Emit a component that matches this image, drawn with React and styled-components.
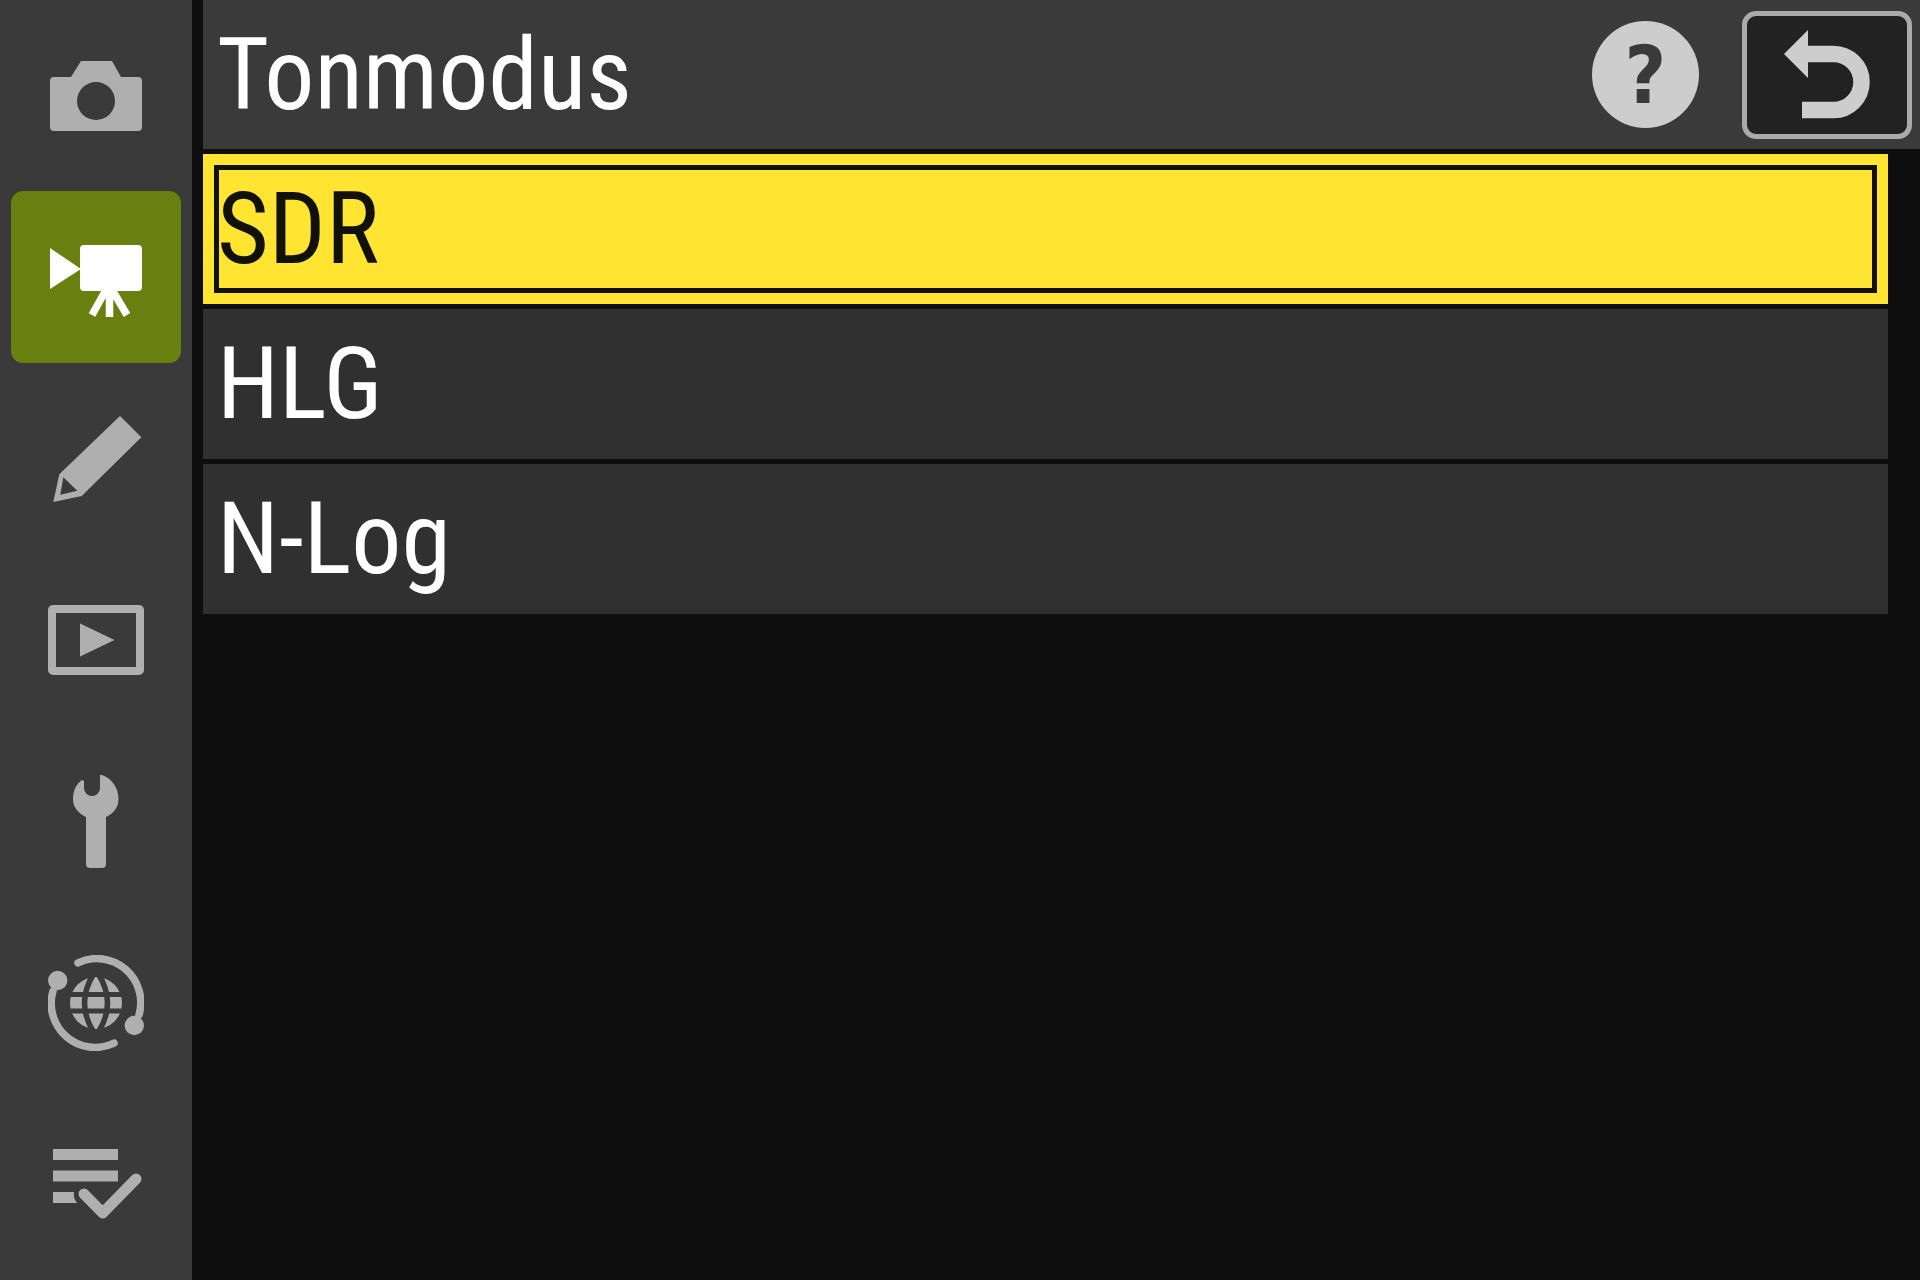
import React, { useState } from "react";
import styled, { createGlobalStyle } from "styled-components";

const GlobalStyle = createGlobalStyle`
  *, *::before, *::after { box-sizing: border-box; }
  body {
    margin: 0;
    background: #0e0e0e;
    font-family: "Roboto Condensed", Roboto, "Open Sans", sans-serif;
    font-weight: 400;
  }
  button {
    margin: 0;
    border: 0;
    font: inherit;
    cursor: pointer;
  }
`;

const Screen = styled.div`
  display: flex;
  gap: 11px;
  min-height: 100vh;
`;

const Sidebar = styled.nav`
  flex: none;
  display: flex;
  flex-direction: column;
  gap: 10px;
  width: 192px;
  padding: 10px 11px;
  background: #3a3a3a;
`;

const Tab = styled.button`
  flex: 1;
  display: flex;
  align-items: center;
  justify-content: center;
  padding: 0;
  border-radius: 12px;
  background: ${(p) => (p.$active ? "#698010" : "#3a3a3a")};
  color: ${(p) => (p.$active ? "#fff" : "#afafaf")};
`;

const Icon = styled.svg`
  display: block;
  width: 96px;
  height: 96px;
  fill: currentColor;
`;

const Main = styled.main`
  flex: 1;
  min-width: 0;
`;

const Header = styled.header`
  display: flex;
  align-items: center;
  height: 149px;
  padding-right: 8px;
  background: #3a3a3a;
`;

const Title = styled.h1`
  flex: 1;
  margin: 0;
  padding-left: 14px;
  font-size: 100px;
  line-height: 148px;
  font-weight: inherit;
  color: #fff;
`;

const HelpButton = styled.button`
  width: 107px;
  height: 107px;
  margin-right: 43px;
  padding: 2px 0 0;
  border-radius: 50%;
  background: #cdcdcd;
  color: #3a3a3a;
  font-family: "DejaVu Sans Condensed", "DejaVu Sans", sans-serif;
  font-weight: 700;
  font-size: 80px;
  line-height: 105px;
`;

const BackButton = styled.button`
  display: flex;
  align-items: center;
  justify-content: center;
  width: 170px;
  height: 128px;
  padding: 0;
  border: 5px solid #aaa;
  border-radius: 14px;
  background: #222;
  color: #cdcdcd;
`;

const BackIcon = styled.svg`
  display: block;
  width: 88px;
  height: 90px;
  fill: currentColor;
`;

const Options = styled.div`
  display: flex;
  flex-direction: column;
  gap: 5px;
  padding: 5px 32px 0 0;
`;

const Option = styled.button`
  height: 150px;
  padding: 0 0 0 14px;
  text-align: left;
  font-size: 100px;
  line-height: 148px;
  background: ${(p) => (p.$selected ? "#ffe432" : "#303030")};
  color: ${(p) => (p.$selected ? "#111108" : "#fff")};
  outline: ${(p) => (p.$selected ? "5px solid #111108" : "none")};
  outline-offset: -16px;
`;

const CameraIcon = () => (
  <Icon viewBox="0 0 96 96">
    <path
      fillRule="evenodd"
      d="M6 29H23L33 13H64L73 29H90Q94 29 94 33V79Q94 83 90 83H6Q2 83 2 79V33Q2 29 6 29ZM48 34A19 19 0 1 0 48 72A19 19 0 1 0 48 34Z"
    />
  </Icon>
);

const MovieIcon = () => (
  <Icon viewBox="0 0 96 96">
    <path d="M2 19L33 40L2 60Z" />
    <rect x="32" y="16" width="62" height="46" rx="4" />
    <path d="M59 59L44 86M63 59L79 86M61.500 60V88" fill="none" stroke="currentColor" strokeWidth="7.500" />
  </Icon>
);

const PencilIcon = () => (
  <Icon viewBox="0 0 96 96">
    <path
      fillRule="evenodd"
      d="M72 5L93.300 26.300L33.700 85L5.300 91L11.300 63.300ZM15.300 66.300L12.300 83.700L29.300 79.700Z"
    />
  </Icon>
);

const PlayIcon = () => (
  <Icon viewBox="0 0 96 96">
    <rect x="4" y="17" width="88" height="62" rx="1" fill="none" stroke="currentColor" strokeWidth="8" />
    <path d="M32 31.500L66.500 48L32 64.500Z" />
  </Icon>
);

const WrenchIcon = () => (
  <Icon viewBox="0 0 96 96">
    <path d="M34 7L36 8V15A8 8 0 0 0 52 15V2L54 2C65 6 70.500 16 70.500 26C70.500 34 66 40 58 44V91Q58 95 54 95H42Q38 95 38 91V44C30 40 25 34 25 26C25 18 28 11 34 7Z" />
  </Icon>
);

const NetworkIcon = () => (
  <Icon viewBox="0 0 96 96">
    <g fill="none" stroke="currentColor" strokeWidth="7.500" strokeLinecap="round">
      <path d="M30 7.800A44 44 0 0 1 91 60" />
      <path d="M66 88.200A44 44 0 0 1 5 36" />
    </g>
    <circle cx="9.700" cy="25.500" r="9.700" />
    <circle cx="86.300" cy="70.500" r="9.700" />
    <circle cx="48" cy="48" r="26" />
    <g fill="none" stroke="#3a3a3a">
      <path d="M20 39.500H76M20 56H76" strokeWidth="5" />
      <path d="M45 20Q28 48 45 76M51 20Q68 48 51 76" strokeWidth="5.500" />
    </g>
  </Icon>
);

const MyMenuIcon = () => (
  <Icon viewBox="0 0 96 96">
    <path d="M5 13H70V24H5ZM5 34.500H70V45.500H5ZM5 56H26Q25 62 29 67H5Z" />
    <path
      d="M36 58L54.700 77L88 43"
      fill="none"
      stroke="currentColor"
      strokeWidth="11"
      strokeLinecap="round"
      strokeLinejoin="round"
    />
  </Icon>
);

const TABS = [
  { name: "Fotoaufnahme", Glyph: CameraIcon },
  { name: "Videoaufnahme", Glyph: MovieIcon },
  { name: "Individualfunktionen", Glyph: PencilIcon },
  { name: "Wiedergabe", Glyph: PlayIcon },
  { name: "System", Glyph: WrenchIcon },
  { name: "Netzwerk", Glyph: NetworkIcon },
  { name: "Mein Menü", Glyph: MyMenuIcon },
];

const MODES = ["SDR", "HLG", "N-Log"];

export default function App() {
  const [tab, setTab] = useState(1);
  const [mode, setMode] = useState("SDR");

  return (
    <>
      <GlobalStyle />
      <Screen>
        <Sidebar>
          {TABS.map(({ name, Glyph }, i) => (
            <Tab key={name} type="button" aria-label={name} $active={i === tab} onClick={() => setTab(i)}>
              <Glyph />
            </Tab>
          ))}
        </Sidebar>
        <Main>
          <Header>
            <Title>Tonmodus</Title>
            <HelpButton type="button" aria-label="Hilfe">?</HelpButton>
            <BackButton type="button" aria-label="Zurück">
              <BackIcon viewBox="0 0 88 90">
                <path d="M1 24L25 0V48Z" />
                <path
                  d="M24 24H50.500A28 28 0 0 1 50.500 80H19"
                  fill="none"
                  stroke="currentColor"
                  strokeWidth="16.500"
                />
              </BackIcon>
            </BackButton>
          </Header>
          <Options>
            {MODES.map((name) => (
              <Option
                key={name}
                type="button"
                aria-pressed={name === mode}
                $selected={name === mode}
                onClick={() => setMode(name)}
              >
                {name}
              </Option>
            ))}
          </Options>
        </Main>
      </Screen>
    </>
  );
}
